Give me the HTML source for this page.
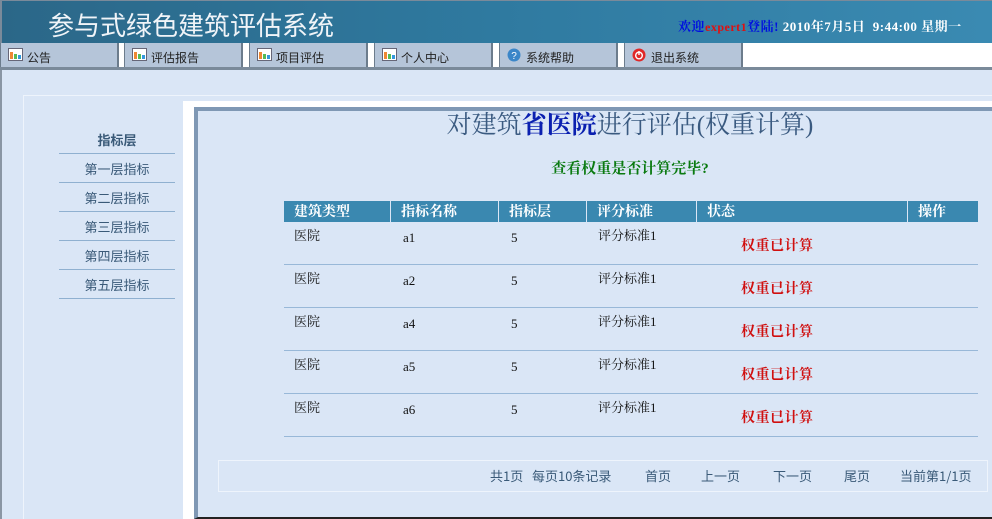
<!DOCTYPE html>
<html><head><meta charset="utf-8"><style>
*{margin:0;padding:0;box-sizing:border-box}
body{width:992px;height:519px;overflow:hidden;background:#dae6f6;font-family:"Liberation Serif","Noto Serif CJK SC","Noto Sans CJK SC",serif;font-size:13px;position:relative}
.a{position:absolute}
#hd{left:0;top:0;width:992px;height:43px;background:linear-gradient(90deg,#2b6788 0%,#2f7aa0 50%,#3a8ab2 100%);border-top:1px solid #7a8a9a;border-left:2px solid #7a8a9a}
#ttl{left:48px;top:10px;color:#f0f4f8;font:26px "Noto Sans CJK SC",sans-serif;line-height:30px}
#wel{left:678px;top:16px;font-size:13px;font-weight:bold;color:#fff;white-space:nowrap;letter-spacing:0.5px}
#tabs{left:0;top:43px;width:992px;height:24px;background:#fff}
.tab{position:absolute;top:0;height:24px;width:119px;background:#b5c5d9;border-left:1px solid #6c7c8c;border-right:2px solid #6c7c8c;font:12px "Noto Sans CJK SC",sans-serif;color:#222;padding:7px 0 0 26px;line-height:16px}
.ic{position:absolute;left:7px;top:5px;width:15px;height:13px;border:1px solid #667;background:#fff}
.ic i{position:absolute;bottom:1px;width:3px}
#bar{left:0;top:67px;width:992px;height:3px;background:#7a8a9a}
#lb{left:0;top:70px;width:2px;height:449px;background:#8a96a4}
#frame{left:23px;top:95px;width:969px;height:424px;border-top:1px solid #eef4fc;border-left:1px solid #eef4fc}
#white{left:183px;top:101px;width:809px;height:418px;background:#fff}
#main{left:194px;top:107px;width:798px;height:412px;background:#dae6f6;border-left:4px solid #7f98b4;border-top:4px solid #7f98b4;border-bottom:2px solid #222}
.side{left:59px;width:116px;text-align:center;font:13px "Noto Sans CJK SC",sans-serif;color:#3a5a78;border-bottom:1px solid #8fb0d0;height:29px;line-height:30px}
.th{top:201px;height:21px;background:#3a88b0;color:#fff;font-weight:bold;font-size:14px;line-height:21px;padding-left:10px;padding-top:1px;border-right:1px solid #dae6f6}
.td{font-size:13px;color:#111;line-height:16px}
.rl{left:284px;width:694px;height:1px;background:#98b8d8}
.st{color:#d01010;font-weight:bold;font-size:14px;letter-spacing:0.5px}
#pg{left:218px;top:460px;width:770px;height:32px;border:1px solid #eef4fc;font:13px "Noto Sans CJK SC",sans-serif;color:#3a5a78;line-height:30px}
</style></head><body>
<div id="hd" class="a"></div>
<div id="ttl" class="a">参与式绿色建筑评估系统</div>
<div id="wel" class="a"><span style="color:#0010e0">欢迎</span><span style="color:#e01010;font-size:12px">expert1</span><span style="color:#0010e0">登陆!</span> 2010年7月5日&nbsp;&nbsp;9:44:00 星期一</div>
<div id="tabs" class="a">
<div class="tab" style="left:0"><span class="ic"><i style="left:1px;height:7px;background:#e83"></i><i style="left:5px;height:5px;background:#5b5"></i><i style="left:9px;height:4px;background:#39d"></i></span>公告</div>
<div class="tab" style="left:124px"><span class="ic"><i style="left:1px;height:7px;background:#e83"></i><i style="left:5px;height:5px;background:#5b5"></i><i style="left:9px;height:4px;background:#39d"></i></span>评估报告</div>
<div class="tab" style="left:249px"><span class="ic"><i style="left:1px;height:7px;background:#e83"></i><i style="left:5px;height:5px;background:#5b5"></i><i style="left:9px;height:4px;background:#39d"></i></span>项目评估</div>
<div class="tab" style="left:374px"><span class="ic"><i style="left:1px;height:7px;background:#e83"></i><i style="left:5px;height:5px;background:#5b5"></i><i style="left:9px;height:4px;background:#39d"></i></span>个人中心</div>
<div class="tab" style="left:499px"><span class="ic" style="border:none;background:none"><svg width="14" height="14" viewBox="0 0 14 14"><circle cx="7" cy="7" r="6.5" fill="#3b86c8"/><text x="7" y="11" font-size="10" fill="#fff" text-anchor="middle" font-family="Liberation Sans">?</text></svg></span>系统帮助</div>
<div class="tab" style="left:624px"><span class="ic" style="border:none;background:none"><svg width="14" height="14" viewBox="0 0 14 14"><circle cx="7" cy="7" r="6.5" fill="#e02828"/><circle cx="7" cy="7.5" r="3.3" fill="none" stroke="#fff" stroke-width="1.4"/><line x1="7" y1="3" x2="7" y2="7" stroke="#fff" stroke-width="1.4"/></svg></span>退出系统</div>
</div>
<div id="bar" class="a"></div>
<div id="lb" class="a"></div>
<div id="frame" class="a"></div>
<div id="white" class="a"></div>
<div id="main" class="a"></div>
<div class="a side" style="top:125px;font-weight:bold;font-size:13px">指标层</div>
<div class="a side" style="top:154px">第一层指标</div>
<div class="a side" style="top:183px">第二层指标</div>
<div class="a side" style="top:212px">第三层指标</div>
<div class="a side" style="top:241px">第四层指标</div>
<div class="a side" style="top:270px">第五层指标</div>
<div class="a" style="left:198px;width:794px;top:111px;text-align:center;font-size:25px;color:#3a5a80;line-height:30px;padding-left:70px">对建筑<b style="color:#0a20b0">省医院</b>进行评估(权重计算)</div>
<div class="a" style="left:198px;width:794px;top:157px;text-align:center;font-size:15px;font-weight:bold;color:#0a7a10;padding-left:70px">查看权重是否计算完毕?</div>
<div class="a th" style="left:284px;width:107px">建筑类型</div>
<div class="a th" style="left:391px;width:108px">指标名称</div>
<div class="a th" style="left:499px;width:88px">指标层</div>
<div class="a th" style="left:587px;width:110px">评分标准</div>
<div class="a th" style="left:697px;width:211px">状态</div>
<div class="a th" style="left:908px;width:70px;border-right:none">操作</div>

<div class="a td" style="left:294px;top:228px">医院</div><div class="a td" style="left:403px;top:230px">a1</div><div class="a td" style="left:511px;top:230px">5</div><div class="a td" style="left:598px;top:228px">评分标准1</div><div class="a st" style="left:741px;top:235px">权重已计算</div>
<div class="a rl" style="top:264px"></div>
<div class="a td" style="left:294px;top:271px">医院</div><div class="a td" style="left:403px;top:273px">a2</div><div class="a td" style="left:511px;top:273px">5</div><div class="a td" style="left:598px;top:271px">评分标准1</div><div class="a st" style="left:741px;top:278px">权重已计算</div>
<div class="a rl" style="top:307px"></div>
<div class="a td" style="left:294px;top:314px">医院</div><div class="a td" style="left:403px;top:316px">a4</div><div class="a td" style="left:511px;top:316px">5</div><div class="a td" style="left:598px;top:314px">评分标准1</div><div class="a st" style="left:741px;top:321px">权重已计算</div>
<div class="a rl" style="top:350px"></div>
<div class="a td" style="left:294px;top:357px">医院</div><div class="a td" style="left:403px;top:359px">a5</div><div class="a td" style="left:511px;top:359px">5</div><div class="a td" style="left:598px;top:357px">评分标准1</div><div class="a st" style="left:741px;top:364px">权重已计算</div>
<div class="a rl" style="top:393px"></div>
<div class="a td" style="left:294px;top:400px">医院</div><div class="a td" style="left:403px;top:402px">a6</div><div class="a td" style="left:511px;top:402px">5</div><div class="a td" style="left:598px;top:400px">评分标准1</div><div class="a st" style="left:741px;top:407px">权重已计算</div>
<div class="a rl" style="top:436px"></div>

<div id="pg" class="a"><span class="a" style="left:271px">共1页</span><span class="a" style="left:313px">每页10条记录</span><span class="a" style="left:426px">首页</span><span class="a" style="left:482px">上一页</span><span class="a" style="left:554px">下一页</span><span class="a" style="left:625px">尾页</span><span class="a" style="left:681px">当前第1/1页</span></div>
</body></html>
